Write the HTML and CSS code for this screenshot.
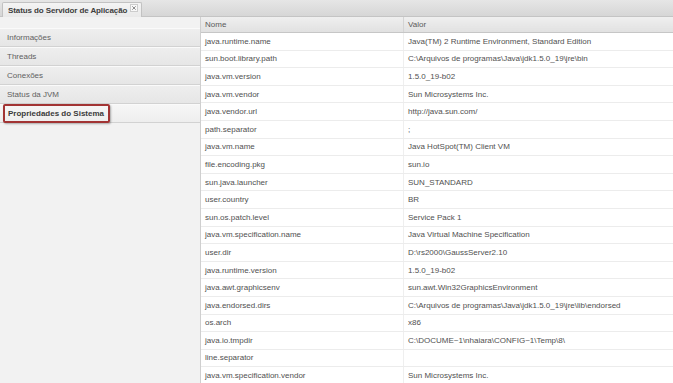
FILE: index.html
```html
<!DOCTYPE html>
<html lang="pt">
<head>
  <meta charset="UTF-8" />
  <title>Status do Servidor de Aplicação</title>
  <link rel="stylesheet" href="styles.css">
</head>
<body>

  <!-- Abas -->
  <div class="tab-bar">
    <div class="tab">
      <span class="tab-title">Status do Servidor de Aplicação</span>
      <span class="tab-close">
        <svg width="6" height="6" viewBox="0 0 6 6"><path d="M1.3 1.3 L4.7 4.7 M4.7 1.3 L1.3 4.7" stroke="#8a8a8a" stroke-width="1"/></svg>
      </span>
    </div>
  </div>

  <div class="main">
    <!-- Menu lateral -->
    <div class="sidebar">
      <div class="menu-item">Informações</div>
      <div class="menu-item">Threads</div>
      <div class="menu-item">Conexões</div>
      <div class="menu-item">Status da JVM</div>
      <div class="menu-item active"><span class="highlight">Propriedades do Sistema</span></div>
    </div>

    <!-- Propriedades -->
    <div class="content">
      <table class="props">
        <thead>
          <tr><th class="col-name">Nome</th><th>Valor</th></tr>
        </thead>
        <tbody>
          <tr><td>java.runtime.name</td><td>Java(TM) 2 Runtime Environment, Standard Edition</td></tr>
          <tr><td>sun.boot.library.path</td><td>C:\Arquivos de programas\Java\jdk1.5.0_19\jre\bin</td></tr>
          <tr><td>java.vm.version</td><td>1.5.0_19-b02</td></tr>
          <tr><td>java.vm.vendor</td><td>Sun Microsystems Inc.</td></tr>
          <tr><td>java.vendor.url</td><td>http://java.sun.com/</td></tr>
          <tr><td>path.separator</td><td>;</td></tr>
          <tr><td>java.vm.name</td><td>Java HotSpot(TM) Client VM</td></tr>
          <tr><td>file.encoding.pkg</td><td>sun.io</td></tr>
          <tr><td>sun.java.launcher</td><td>SUN_STANDARD</td></tr>
          <tr><td>user.country</td><td>BR</td></tr>
          <tr><td>sun.os.patch.level</td><td>Service Pack 1</td></tr>
          <tr><td>java.vm.specification.name</td><td>Java Virtual Machine Specification</td></tr>
          <tr><td>user.dir</td><td>D:\rs2000\GaussServer2.10</td></tr>
          <tr><td>java.runtime.version</td><td>1.5.0_19-b02</td></tr>
          <tr><td>java.awt.graphicsenv</td><td>sun.awt.Win32GraphicsEnvironment</td></tr>
          <tr><td>java.endorsed.dirs</td><td>C:\Arquivos de programas\Java\jdk1.5.0_19\jre\lib\endorsed</td></tr>
          <tr><td>os.arch</td><td>x86</td></tr>
          <tr><td>java.io.tmpdir</td><td>C:\DOCUME~1\nhaiara\CONFIG~1\Temp\8\</td></tr>
          <tr><td>line.separator</td><td></td></tr>
          <tr><td>java.vm.specification.vendor</td><td>Sun Microsystems Inc.</td></tr>
        </tbody>
      </table>
    </div>
  </div>

</body>
</html>
```

FILE: styles.css
```css
body {
  margin: 0;
  padding: 0;
  font-family: 'Liberation Sans', Arial, sans-serif;
  font-size: 8px;
  color: #555555;
  background: #f2f2f2;
  height: 383px;
  overflow: hidden;
}

/* Barre d'onglets */
.tab-bar {
  height: 17px;
  background: linear-gradient(#e6e6e6, #d6d6d6);
  border-bottom: 1px solid #c4c4c4;
  box-sizing: border-box;
  padding-left: 2px;
  display: flex;
  align-items: flex-end;
}

.tab {
  height: 14px;
  padding: 0 3px 0 5px;
  display: flex;
  align-items: center;
  gap: 3px;
  background: linear-gradient(#f4f4f4, #e9e9e9);
  border: 1px solid #c2c2c2;
  border-bottom: none;
  border-radius: 2px 2px 0 0;
  font-weight: bold;
  color: #3d3d3d;
  margin-bottom: -1px;
}

.tab-title {
  letter-spacing: -0.1px;
}

.tab-close {
  width: 6px;
  height: 6px;
  border: 1px solid #cccccc;
  background: #f8f8f8;
  display: flex;
  margin-top: -4px;
}

.main {
  display: flex;
  height: 366px;
}

/* Menu lateral */
.sidebar {
  width: 200px;
  flex-shrink: 0;
  padding-top: 11px;
  background: #f2f2f2;
  border-right: 1px solid #cfcfcf;
}

.menu-item {
  height: 19px;
  box-sizing: border-box;
  padding-left: 7px;
  display: flex;
  align-items: center;
  background: linear-gradient(#eeeeee, #e6e6e6);
  border-top: 1px solid #fafafa;
  border-bottom: 1px solid #d2d2d2;
  color: #5f5f5f;
}

.menu-item.active {
  position: relative;
  font-weight: bold;
  color: #3a3a3a;
  background: linear-gradient(#f6f6f6, #eeeeee);
}

.highlight {
  position: absolute;
  left: 3px;
  top: -1px;
  width: 107px;
  height: 19px;
  box-sizing: border-box;
  padding-left: 3px;
  display: flex;
  align-items: center;
  border: 2px solid #a23434;
  border-radius: 2px;
  box-shadow: 1px 1px 2px rgba(0, 0, 0, 0.3);
}

/* Tabela de propriedades */
.content {
  flex: 1;
  background: #ffffff;
  overflow: hidden;
}

.props {
  width: 100%;
  border-collapse: collapse;
  table-layout: fixed;
}

.props th {
  height: 15px;
  padding: 0 0 0 4px;
  text-align: left;
  font-weight: normal;
  color: #5a5a5a;
  background: linear-gradient(#efefef, #e1e1e1);
  border-bottom: 1px solid #c6c6c6;
  border-left: 1px solid #d4d4d4;
}

.props th.col-name {
  width: 198px;
  border-left: none;
}

.props td {
  height: 17.6px;
  padding: 0 0 0 4px;
  box-sizing: border-box;
  border-bottom: 1px solid #ececec;
  white-space: nowrap;
  overflow: hidden;
  color: #505050;
}

.props td + td {
  border-left: 1px solid #efefef;
}
```
